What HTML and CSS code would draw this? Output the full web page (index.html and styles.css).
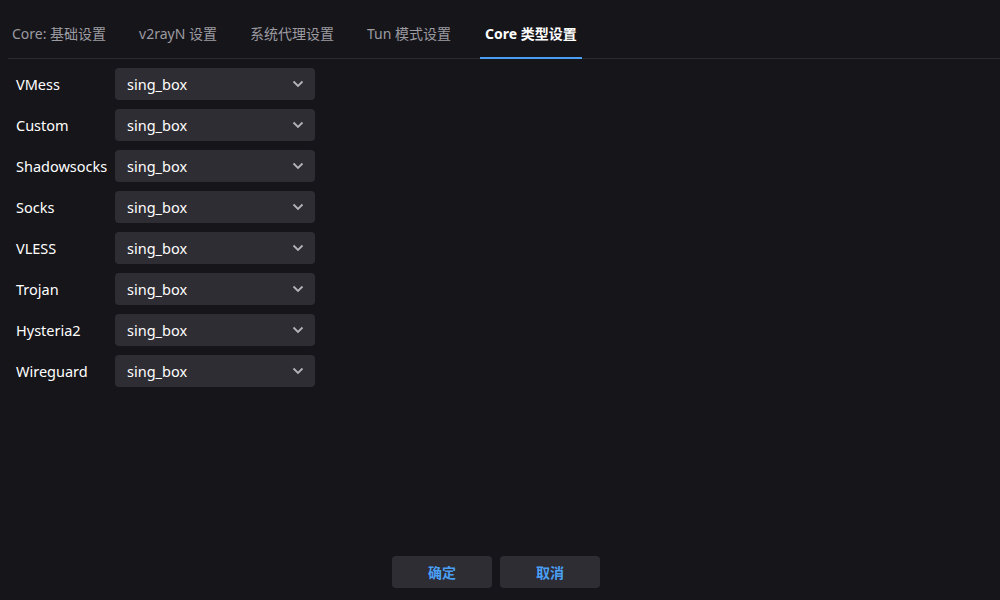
FILE: index.html
```html
<!DOCTYPE html>
<html lang="zh-CN">
<head>
    <meta charset="UTF-8">
    <meta name="viewport" content="width=device-width, initial-scale=1.0">
    <title>设置</title>
    <link rel="stylesheet" href="styles.css">
</head>
<body>
    <div class="tabs">
        <div class="tab">Core: 基础设置</div>
        <div class="tab">v2rayN 设置</div>
        <div class="tab">系统代理设置</div>
        <div class="tab">Tun 模式设置</div>
        <div class="tab active">Core 类型设置</div>
    </div>

    <div class="form">
        <div class="label">VMess</div>
        <div class="combo"><span>sing_box</span><svg width="12" height="8" viewBox="0 0 12 8"><path d="M1.5 1.5 L6 6 L10.5 1.5" /></svg></div>
        <div class="label">Custom</div>
        <div class="combo"><span>sing_box</span><svg width="12" height="8" viewBox="0 0 12 8"><path d="M1.5 1.5 L6 6 L10.5 1.5" /></svg></div>
        <div class="label">Shadowsocks</div>
        <div class="combo"><span>sing_box</span><svg width="12" height="8" viewBox="0 0 12 8"><path d="M1.5 1.5 L6 6 L10.5 1.5" /></svg></div>
        <div class="label">Socks</div>
        <div class="combo"><span>sing_box</span><svg width="12" height="8" viewBox="0 0 12 8"><path d="M1.5 1.5 L6 6 L10.5 1.5" /></svg></div>
        <div class="label">VLESS</div>
        <div class="combo"><span>sing_box</span><svg width="12" height="8" viewBox="0 0 12 8"><path d="M1.5 1.5 L6 6 L10.5 1.5" /></svg></div>
        <div class="label">Trojan</div>
        <div class="combo"><span>sing_box</span><svg width="12" height="8" viewBox="0 0 12 8"><path d="M1.5 1.5 L6 6 L10.5 1.5" /></svg></div>
        <div class="label">Hysteria2</div>
        <div class="combo"><span>sing_box</span><svg width="12" height="8" viewBox="0 0 12 8"><path d="M1.5 1.5 L6 6 L10.5 1.5" /></svg></div>
        <div class="label">Wireguard</div>
        <div class="combo"><span>sing_box</span><svg width="12" height="8" viewBox="0 0 12 8"><path d="M1.5 1.5 L6 6 L10.5 1.5" /></svg></div>
    </div>

    <div class="footer">
        <button class="btn">确定</button>
        <button class="btn">取消</button>
    </div>
</body>
</html>
```

FILE: styles.css
```css
html, body {
    height: 100%;
}
body {
    margin: 0;
    background-color: #16151a;
    color: #ffffff;
    font-family: "Noto Sans", "Noto Sans CJK SC", sans-serif;
    display: flex;
    flex-direction: column;
}
.tabs {
    display: flex;
    gap: 25px;
    margin-left: 8px;
    padding-top: 10px;
    border-bottom: 1px solid #2c2b31;
}
.tab {
    height: 47px;
    line-height: 47px;
    padding: 0 4px;
    font-size: 14px;
    color: #9c9ba1;
    border-bottom: 2px solid transparent;
    margin-bottom: -1px;
}
.tab.active {
    color: #ffffff;
    font-weight: bold;
    border-bottom-color: #4a9ff5;
    padding: 0 5px;
}
.form {
    flex: 1;
    display: grid;
    grid-template-columns: 99px 200px;
    grid-auto-rows: 32px;
    row-gap: 9px;
    padding: 9px 0 0 16px;
    align-content: start;
}
.label {
    display: flex;
    align-items: center;
    font-size: 14.5px;
    white-space: nowrap;
}
.combo {
    display: flex;
    align-items: center;
    justify-content: space-between;
    background-color: #2e2d33;
    border-radius: 4px;
    padding: 0 11px 0 12px;
    font-size: 14.5px;
}
.combo svg path {
    fill: none;
    stroke: #b4b3b9;
    stroke-width: 1.8;
}
.footer {
    display: flex;
    justify-content: center;
    gap: 8px;
    padding: 0 8px 12px 0;
}
.btn {
    width: 100px;
    height: 32px;
    border: none;
    border-radius: 4px;
    background-color: #2e2d33;
    color: #4a9ff5;
    font-family: "Noto Sans", "Noto Sans CJK SC", sans-serif;
    font-size: 14px;
    font-weight: bold;
}
```
